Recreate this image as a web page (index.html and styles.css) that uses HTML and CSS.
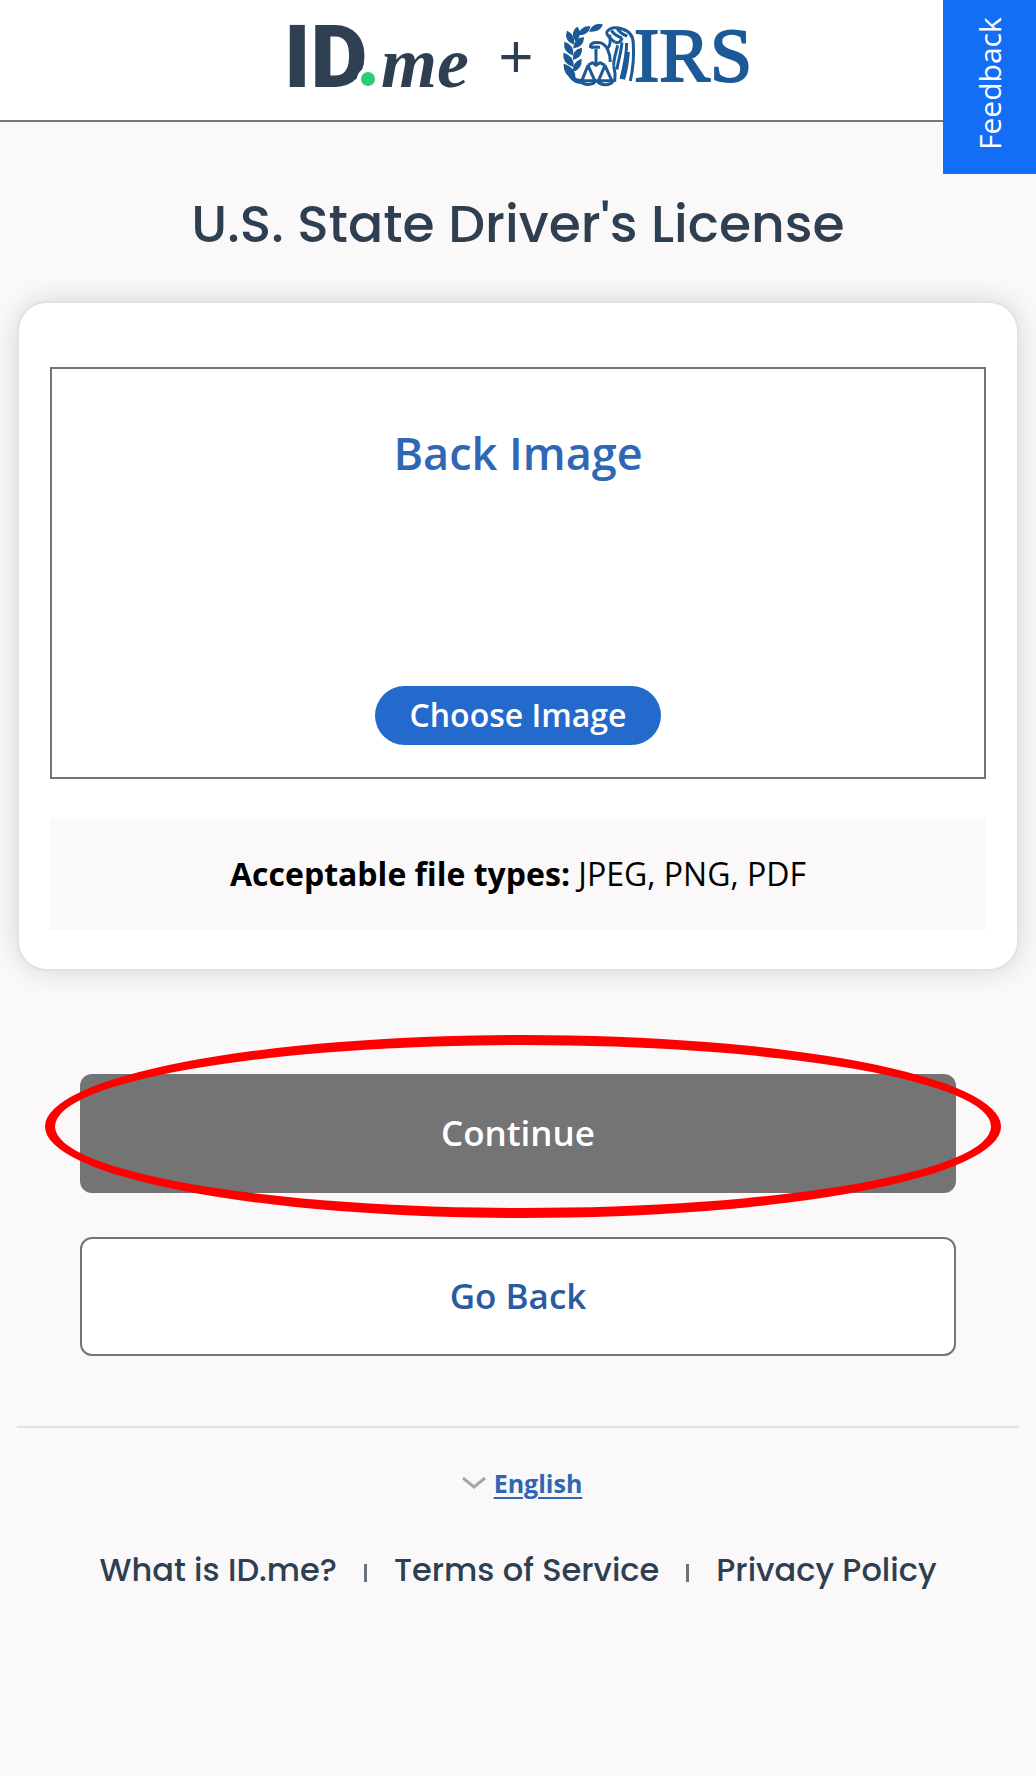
FILE: index.html
```html
<!DOCTYPE html>
<html lang="en">
<head>
    <meta charset="UTF-8">
    <meta name="viewport" content="width=device-width, initial-scale=1.0">
    <title>U.S. State Driver's License</title>
    <link rel="stylesheet" href="styles.css">
</head>
<body>
    <header class="header">
        <svg class="logo-idme" viewBox="0 -16 196 112" role="img" aria-label="ID.me">
            <text class="logo-id" x="7" y="72">ID</text>
            <circle class="logo-dot-gap" cx="91" cy="64" r="11"/>
            <circle class="logo-dot" cx="91" cy="64" r="7"/>
            <text class="logo-me" x="104" y="72">me</text>
        </svg>
        <span class="plus">+</span>
        <svg class="logo-irs" viewBox="0 -16 200 112" role="img" aria-label="IRS">
            <g transform="translate(-3 0) scale(0.3333)">
                <!-- laurel leaves -->
                <g class="emblem-fill">
                    <path d="M138 30c-14-4-29 1-36 18 15 1 30-3 36-18z"/>
                    <path d="M101 36c-12-2-27 4-31 23 15-1 27-8 31-23z"/>
                    <path d="M64 38c-12 7-16 22-5 38 12-11 15-25 5-38z"/>
                    <path d="M34 50c-5 17 2 30 18 36 3-16-4-29-18-36z"/>
                    <path d="M82 69c-16 0-26 10-28 29 16-2 27-11 28-29z"/>
                    <path d="M27 83c-3 18 5 30 23 36 2-17-7-30-23-36z"/>
                    <path d="M76 101c-16 3-24 14-23 31 15-4 24-14 23-31z"/>
                    <path d="M24 116c-2 18 7 31 27 37 1-18-9-31-27-37z"/>
                    <path d="M75 134c-15 6-23 16-22 34 16-6 23-18 22-34z"/>
                    <path d="M25 149c0 22 11 36 32 40 0-20-12-34-32-40z"/>
                    <path d="M38 181c8 15 20 23 39 24l5-11c-16 1-29-4-44-13z"/>
                </g>
                <!-- eagle -->
                <g class="emblem-line">
                    <path d="M104 99c-3-12 8-18 20-16 13-2 22 6 30 18 10-10 10-26 7-42"/>
                    <path d="M104 99c8-5 17-3 28-2"/>
                    <path d="M154 101c6 13 9 25 9 40"/>
                    <path d="M151 54c8-18 30-19 48-12 25 8 33 24 33 44 2 34 0 72-9 112"/>
                    <path d="M151 54c7 12 15 21 26 27M166 46c8 12 17 18 32 23M184 41c7 11 16 18 30 22"/>
                    <path d="M177 81c8 5 16 1 22-12M185 91c-5 23-12 40-12 60M198 82c-3 34-13 60-15 82"/>
                    <path d="M212 84c0 36-8 72-17 108M217 111c-2 28-6 55-14 82M173 151c4 15 6 29 3 49"/>
                </g>
                <!-- scales -->
                <g class="emblem-line">
                    <path d="M120 101v48M96 151l13-8 11 8 12-8 15 8"/>
                    <path d="M96 151l-18 45M96 151l20 45M147 151l-19 45M147 151l20 45"/>
                    <path d="M73 197h47c-8 15-37 16-47 0zM123 197h49c-9 16-39 16-49 0z"/>
                </g>
            </g>
            <text class="logo-text-irs" x="75" y="66">IRS</text>
        </svg>
    </header>

    <button type="button" class="feedback">Feedback</button>

    <main class="main">
        <h1>U.S. State Driver's License</h1>

        <section class="card">
            <div class="upload">
                <h2>Back Image</h2>
                <button type="button" class="choose">Choose Image</button>
            </div>
            <p class="file-types"><strong>Acceptable file types:</strong> JPEG, PNG, PDF</p>
        </section>

        <div class="actions">
            <div class="highlight">
                <button type="button" class="btn primary">Continue</button>
                <span class="ring"></span>
            </div>
            <button type="button" class="btn secondary">Go Back</button>
        </div>
    </main>

    <footer class="footer">
        <div class="language">
            <svg class="chevron" viewBox="0 0 24 12" aria-hidden="true">
                <path d="M1 1l11 9 11-9"/>
            </svg>
            <a href="#">English</a>
        </div>
        <nav class="links">
            <a href="#">What is ID.me?</a>
            <span class="divider"></span>
            <a href="#">Terms of Service</a>
            <span class="divider"></span>
            <a href="#">Privacy Policy</a>
        </nav>
    </footer>
</body>
</html>
```
FILE: styles.css
```css
* {
    margin: 0;
    padding: 0;
    box-sizing: border-box;
}

body {
    font-family: "Open Sans", "Noto Sans", sans-serif;
    font-size: 32px;
    background: #faf8f9;
    color: #000;
    min-height: 100vh;
}

button {
    font-family: inherit;
    cursor: pointer;
}

.header {
    display: flex;
    align-items: center;
    justify-content: center;
    height: 122px;
    padding-bottom: 10px;
    background: white;
    border-bottom: 2px solid #747474;
}

.logo-idme {
    width: 196px;
    height: 112px;
}

.logo-id {
    font-family: Roboto, sans-serif;
    font-size: 88px;
    font-weight: 900;
    fill: #2e3f51;
}

.logo-me {
    font-family: "Liberation Serif", serif;
    font-size: 72px;
    font-weight: bold;
    font-style: italic;
    fill: #2e3f51;
}

.logo-dot { fill: #2ecc71; }
.logo-dot-gap { fill: white; }

.plus {
    width: 86px;
    text-align: center;
    font-size: 62px;
    line-height: 80px;
    color: #2e3f51;
}

.logo-irs {
    width: 200px;
    height: 112px;
}

.logo-text-irs {
    font-family: "Liberation Serif", serif;
    font-size: 76px;
    fill: #1b5a96;
    stroke: #1b5a96;
    stroke-width: 2;
}

.emblem-fill {
    fill: #1b5a96;
    stroke: #1b5a96;
    stroke-width: 4;
}

.emblem-line {
    fill: none;
    stroke: #1b5a96;
    stroke-width: 9;
    stroke-linejoin: round;
}

.feedback {
    position: absolute;
    top: 0;
    right: 0;
    width: 93px;
    height: 174px;
    padding-top: 6px;
    border: none;
    background: #146ef5;
    color: white;
    font-size: 30px;
    writing-mode: vertical-rl;
    transform: rotate(180deg);
}

.main {
    padding: 64px 17px 0;
}

h1 {
    font-family: Poppins, Inter, sans-serif;
    font-size: 52px;
    font-weight: 500;
    line-height: 76px;
    text-align: center;
    color: #2e3f51;
}

.card {
    margin-top: 39px;
    padding: 64px 31px 39px;
    background: white;
    border: 2px solid #e2e2e2;
    border-radius: 30px;
    box-shadow: 0 0 28px rgba(0, 0, 0, 0.14);
}

.upload {
    display: flex;
    flex-direction: column;
    align-items: center;
    justify-content: space-between;
    min-height: 412px;
    padding: 52px 24px 32px;
    border: 2px solid #747474;
}

h2 {
    font-size: 45px;
    font-weight: 600;
    line-height: 64px;
    color: #2f67b5;
}

.choose {
    padding: 0 34px 2px;
    border: none;
    border-radius: 30px;
    background: #2469cc;
    color: white;
    font-size: 32px;
    font-weight: 600;
    line-height: 57px;
}

.file-types {
    margin-top: 40px;
    padding: 31px 20px 32px;
    background: #faf8f9;
    line-height: 48px;
    text-align: center;
}

.actions {
    display: flex;
    flex-direction: column;
    gap: 44px;
    padding: 103px 63px 0;
}

.btn {
    width: 100%;
    height: 119px;
    padding-bottom: 2px;
    border-radius: 12px;
    font-size: 35px;
    font-weight: 600;
}

.primary {
    display: block;
    border: none;
    background: #747474;
    color: white;
}

.secondary {
    border: 2px solid #747474;
    background: white;
    color: #2a5a9f;
}

.highlight {
    position: relative;
}

.ring {
    position: absolute;
    top: -39px;
    right: -45px;
    bottom: -25px;
    left: -35px;
    border: 10px solid #ff0000;
    border-radius: 50%;
    pointer-events: none;
}

.footer {
    margin: 70px 17px 0;
    padding-top: 38px;
    border-top: 2px solid #e2e2e2;
}

.language {
    display: flex;
    align-items: center;
    justify-content: center;
    gap: 8px;
    padding-left: 8px;
    font-size: 25px;
    font-weight: 700;
    line-height: 34px;
}

.language a {
    color: #2f67b5;
    text-decoration-thickness: 2px;
    text-underline-offset: 4px;
}

.chevron {
    width: 24px;
    height: 12px;
    fill: none;
    stroke: #a6a8a8;
    stroke-width: 3;
}

.links {
    display: flex;
    align-items: center;
    justify-content: center;
    gap: 27px;
    margin-top: 48px;
    font-family: Poppins, Inter, sans-serif;
    font-size: 32px;
    font-weight: 500;
    line-height: 44px;
}

.links a {
    color: #2e3f51;
    text-decoration: none;
    white-space: nowrap;
}

.divider {
    width: 3px;
    height: 18px;
    margin-top: 6px;
    background: #6a727c;
}
```
